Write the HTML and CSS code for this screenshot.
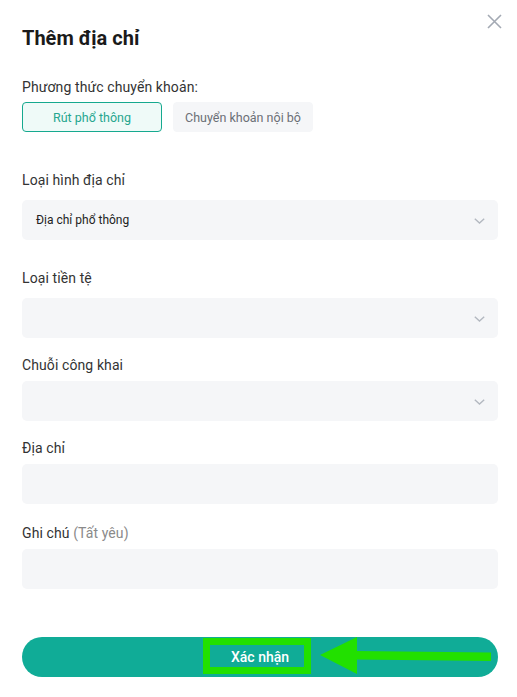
FILE: index.html
```html
<!DOCTYPE html>
<html lang="vi">
<head>
<meta charset="utf-8">
<title>Thêm địa chỉ</title>
<link rel="stylesheet" href="styles.css">
</head>
<body>
<div class="modal">
  <button class="close" aria-label="Đóng">
    <svg width="15" height="15" viewBox="0 0 15 15"><path d="M1 1L14 14M14 1L1 14" stroke="#a3a9b3" stroke-width="1.6" fill="none"/></svg>
  </button>
  <h1 class="title">Thêm địa chỉ</h1>

  <div class="label first">Phương thức chuyển khoản:</div>
  <div class="tabs">
    <div class="tab active">Rút phổ thông</div>
    <div class="tab">Chuyển khoản nội bộ</div>
  </div>

  <div class="label gap-lg">Loại hình địa chỉ</div>
  <div class="field select"><span class="value">Địa chỉ phổ thông</span><svg class="chev" width="11" height="6" viewBox="0 0 11 6"><path d="M0.8 0.8L5.5 5L10.2 0.8" stroke="#b3b8c0" stroke-width="1.4" fill="none"/></svg></div>

  <div class="label gap-md">Loại tiền tệ</div>
  <div class="field select"><span class="value"></span><svg class="chev" width="11" height="6" viewBox="0 0 11 6"><path d="M0.8 0.8L5.5 5L10.2 0.8" stroke="#b3b8c0" stroke-width="1.4" fill="none"/></svg></div>

  <div class="label gap-sm">Chuỗi công khai</div>
  <div class="field select tight"><span class="value"></span><svg class="chev" width="11" height="6" viewBox="0 0 11 6"><path d="M0.8 0.8L5.5 5L10.2 0.8" stroke="#b3b8c0" stroke-width="1.4" fill="none"/></svg></div>

  <div class="label gap-sm">Địa chỉ</div>
  <div class="field tight"></div>

  <div class="label gap-note">Ghi chú <span class="muted">(Tất yêu)</span></div>
  <div class="field tight"></div>

  <button class="submit">Xác nhận</button>

  <svg class="annot" width="517" height="697" viewBox="0 0 517 697">
    <rect x="206.5" y="641.5" width="101" height="29" fill="none" stroke="#22e000" stroke-width="7"/>
    <polygon points="320,655 357,637 357,674" fill="#22e000"/>
    <polygon points="356,651 491,652.5 491,661 356,659.5" fill="#22e000"/>
  </svg>
</div>
</body>
</html>
```

FILE: styles.css
```css
* { box-sizing: border-box; }
html, body { margin: 0; padding: 0; background: #fff; }
body {
  font-family: Roboto, "Noto Sans", "Liberation Sans", sans-serif;
  color: #333;
  width: 517px;
  height: 697px;
  overflow: hidden;
}
.modal {
  position: relative;
  padding: 24px 19px 0 22px;
  display: flex;
  flex-direction: column;
  height: 697px;
}
.close {
  position: absolute;
  top: 14px;
  right: 15px;
  width: 15px;
  height: 15px;
  padding: 0;
  border: 0;
  background: none;
  display: flex;
}
.title {
  margin: 0;
  font-size: 20px;
  line-height: 28px;
  font-weight: 700;
  color: #1a1a1a;
}
.label {
  font-size: 14px;
  line-height: 20px;
  color: #333;
  letter-spacing: 0.1px;
}
.label.first { margin-top: 25px; }
.label.gap-lg { margin-top: 38px; }
.label.gap-md { margin-top: 28px; }
.label.gap-sm { margin-top: 17px; }
.label.gap-note { margin-top: 19px; }
.muted { color: #8a8a8a; }
.tabs {
  display: flex;
  gap: 11px;
  margin-top: 5px;
}
.tab {
  width: 140px;
  height: 30px;
  border-radius: 4px;
  background: #f5f6f8;
  color: #6b6f76;
  font-size: 12.5px;
  display: flex;
  align-items: center;
  justify-content: center;
  border: 1px solid #f5f6f8;
}
.tab.active {
  background: #effaf8;
  border-color: #16a98f;
  color: #26a68f;
}
.field {
  margin-top: 10px;
  height: 40px;
  border-radius: 5px;
  background: #f5f6f8;
  display: flex;
  align-items: center;
  padding-left: 14px;
  padding-right: 13px;
}
.field.tight { margin-top: 6px; }
.select .value {
  flex: 1;
  font-size: 12px;
  color: #222;
}
.chev { flex: none; margin-top: 1px; }
.submit {
  margin-top: 48px;
  height: 40px;
  border: 0;
  border-radius: 20px;
  background: #10ac97;
  color: #fff;
  font-family: Roboto, "Noto Sans", "Liberation Sans", sans-serif;
  font-size: 14px;
  font-weight: 500;
  padding: 0;
}
.annot {
  position: absolute;
  left: 0;
  top: 0;
  pointer-events: none;
}
```
